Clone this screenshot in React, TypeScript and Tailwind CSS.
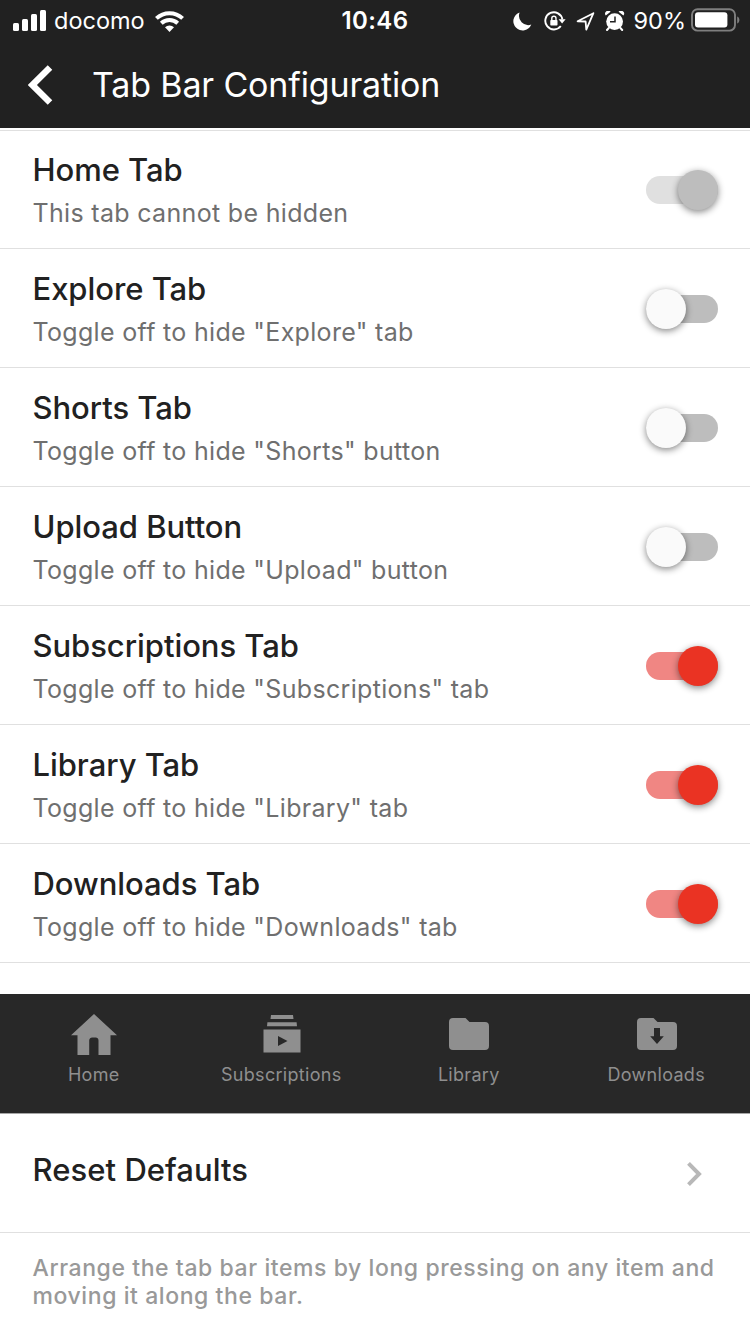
import { useState } from 'react';
import clsx from 'clsx';

type TabRow = {
    id: string;
    title: string;
    note: string;
    on: boolean;
    locked?: boolean;
};

const ROWS: TabRow[] = [
    { id: 'home', title: 'Home Tab', note: 'This tab cannot be hidden', on: true, locked: true },
    { id: 'explore', title: 'Explore Tab', note: 'Toggle off to hide "Explore" tab', on: false },
    { id: 'shorts', title: 'Shorts Tab', note: 'Toggle off to hide "Shorts" button', on: false },
    { id: 'upload', title: 'Upload Button', note: 'Toggle off to hide "Upload" button', on: false },
    { id: 'subs', title: 'Subscriptions Tab', note: 'Toggle off to hide "Subscriptions" tab', on: true },
    { id: 'library', title: 'Library Tab', note: 'Toggle off to hide "Library" tab', on: true },
    { id: 'downloads', title: 'Downloads Tab', note: 'Toggle off to hide "Downloads" tab', on: true },
];

function StatusBar() {
    return (
        <div className="grid h-10 grid-cols-3 items-center text-white">
            <div className="flex items-center pl-[13px]">
                <svg width="34" height="22" viewBox="0 0 34 22" fill="currentColor">
                    <rect x="0" y="13" width="6" height="8" rx="1.5" />
                    <rect x="9" y="9" width="6" height="12" rx="1.5" />
                    <rect x="18" y="4" width="6" height="17" rx="1.5" />
                    <rect x="27" y="0" width="6" height="21" rx="1.5" />
                </svg>
                <span className="ml-[7px] pt-px text-[23.5px] leading-10">docomo</span>
                <svg className="ml-[10px]" width="30" height="22" viewBox="0 0 30 22" fill="none" stroke="currentColor">
                    <path d="M1.4 8.4a19 19 0 0 1 26.2 0" strokeWidth="4" />
                    <path d="M6.3 13.3a12 12 0 0 1 16.4 0" strokeWidth="4" />
                    <path d="M10 17.2a6.8 6.8 0 0 1 9 0L14.5 22Z" fill="currentColor" stroke="none" />
                </svg>
            </div>
            <div className="pt-px text-center text-[24px] leading-10 font-semibold tracking-[0.4px]">10:46</div>
            <div className="flex items-center justify-end pr-[10px]">
                <svg className="mt-px" width="19" height="19" viewBox="0 0 19 19" fill="currentColor">
                    <path d="M6.600.4A9.300 9.300 0 1 0 18.300 12.600 9.400 9.400 0 0 1 6.600.4Z" />
                </svg>
                <svg className="ml-3" width="22" height="20" viewBox="0 0 22 20" fill="none" stroke="currentColor" strokeWidth="1.9">
                    <path d="M16.8 15A8.6 8.6 0 1 1 18.4 8.5" />
                    <path d="M14.6 8.2h7l-3.5 4.4Z" fill="currentColor" stroke="none" />
                    <rect x="6.3" y="9" width="7.2" height="5.6" rx="0.8" fill="currentColor" stroke="none" />
                    <path d="M7.8 9.5V7.4a2.1 2.1 0 0 1 4.2 0v2.1" strokeWidth="1.4" />
                </svg>
                <svg className="mt-px ml-[10px]" width="19" height="19" viewBox="0 0 19 19" fill="none" stroke="currentColor" strokeWidth="1.8" strokeLinejoin="round">
                    <path d="M17.4 1.2 1.6 9.3 9.6 9.5 10.3 17.6Z" />
                </svg>
                <svg className="ml-[10px]" width="20" height="20" viewBox="0 0 20 20" fill="currentColor">
                    <circle cx="9.6" cy="10.6" r="8.4" />
                    <path d="M.8 4.600A3 3 0 0 1 5.600.8ZM18.400 4.600A3 3 0 0 0 13.600.8Z" />
                    <path d="M3.8 17 2 19M15.4 17l1.8 2" stroke="currentColor" strokeWidth="2" strokeLinecap="round" />
                    <path d="M10 5.4v5.4H5" fill="none" stroke="#212121" strokeWidth="1.5" />
                </svg>
                <span className="ml-[9px] pt-px text-[23.5px] leading-10">90%</span>
                <svg className="-mt-px ml-[5px]" width="49" height="24" viewBox="0 0 49 24" fill="none">
                    <rect x="1" y="1.2" width="43" height="21.4" rx="5.6" stroke="#7f7f7f" strokeWidth="1.9" />
                    <rect x="4" y="4.2" width="32.4" height="15.4" rx="3" fill="#fff" />
                    <path d="M46.2 8.4c1.6.6 2.2 2 2.2 3.5s-.6 2.900-2.200 3.500Z" fill="#7f7f7f" />
                </svg>
            </div>
        </div>
    );
}

function Toggle({ on, locked, onChange }: { on: boolean; locked?: boolean; onChange: () => void }) {
    return (
        <button
            type="button"
            role="switch"
            aria-checked={on}
            disabled={locked}
            onClick={onChange}
            className="mt-0.5 grid h-10 w-[72px] items-center"
        >
            <span
                className={clsx(
                    'col-start-1 row-start-1 h-7 rounded-full',
                    locked ? 'bg-[#e0e0e0]' : on ? 'bg-[#f08683]' : 'bg-[#bdbdbd]',
                )}
            />
            <span
                className={clsx(
                    'col-start-1 row-start-1 size-10 rounded-full shadow-[0_2px_7px_rgba(0,0,0,0.48)]',
                    on ? 'justify-self-end' : 'justify-self-start',
                    locked ? 'bg-[#bdbdbd]' : on ? 'bg-[#ea3323]' : 'bg-[#fafafa]',
                )}
            />
        </button>
    );
}

function HomeIcon() {
    return (
        <svg className="ml-px" width="46" height="42" viewBox="0 0 46 42" fill="currentColor">
            <path d="M23 0 46 21.300H39.500V41H27.500V26.500C27.500 24 26 23.600 23 23.600S18.200 24 18.200 26.500V41H6.500V21.300H0Z" />
        </svg>
    );
}

function SubscriptionsIcon() {
    return (
        <svg className="ml-0.5" width="38" height="42" viewBox="0 0 38 42" fill="currentColor">
            <path d="M8 1h22l.5 4h-23ZM4.400 8.300h29.200l.4 4H4Z" />
            <path fillRule="evenodd" d="M.5 15.500h37v23H.5ZM15 22v10l9.500-5Z" />
        </svg>
    );
}

function FolderIcon({ arrow }: { arrow?: boolean }) {
    return (
        <svg className="ml-px" width="40" height="42" viewBox="0 0 40 42">
            <path
                fill="currentColor"
                d="M4 4h12.500l4 4H36a4 4 0 0 1 4 4v20a4 4 0 0 1-4 4H4a4 4 0 0 1-4-4V8a4 4 0 0 1 4-4Z"
            />
            {arrow && <path fill="#282828" d="M17 14h6v8.200h3.800L20 30l-6.800-7.800H17Z" />}
        </svg>
    );
}

const TABS = [
    { label: 'Home', icon: <HomeIcon /> },
    { label: 'Subscriptions', icon: <SubscriptionsIcon /> },
    { label: 'Library', icon: <FolderIcon /> },
    { label: 'Downloads', icon: <FolderIcon arrow /> },
];

export default function App() {
    const [rows, setRows] = useState<TabRow[]>(ROWS);

    const flip = (id: string) => {
        setRows((prev) => prev.map((r) => (r.id === id ? { ...r, on: !r.on } : r)));
    };

    return (
        <div className="h-[1334px] w-[750px] overflow-hidden bg-white font-['Inter','Liberation_Sans',sans-serif] text-[#212121]">
            <header className="h-32 bg-[#212121] text-white">
                <StatusBar />
                <div className="flex h-[88px] items-center pl-7">
                    <svg className="mt-px" width="25" height="40" viewBox="0 0 25 40" fill="none" stroke="currentColor" strokeWidth="6.4">
                        <path d="M22 2.400 4.400 20 22 37.600" />
                    </svg>
                    <h1 className="ml-[39px] pt-0.5 text-[34px] leading-[44px] tracking-[-0.15px]">Tab Bar Configuration</h1>
                </div>
            </header>

            <main>
                <div className="mt-0.5 -mb-px h-px bg-[#e0e0e0]" />
                {rows.map((r) => (
                    <div key={r.id} className="flex h-[119px] items-center justify-between border-b border-[#e0e0e0] pr-8 pl-[32.5px]">
                        <div className="pt-1">
                            <div className="text-[31px] leading-[44px] font-medium tracking-[-0.05px]">{r.title}</div>
                            <div className="text-[25px] leading-[42px] tracking-[0.32px] text-[#6f6f6f]">{r.note}</div>
                        </div>
                        <Toggle on={r.on} locked={r.locked} onChange={() => flip(r.id)} />
                    </div>
                ))}

                {/* Preview of the bar */}
                <nav className="mt-[31px] grid h-[120px] grid-cols-4 border-b border-[#a6a6a6] bg-[#282828] text-[#8f8f8f]">
                    {TABS.map((t) => (
                        <div key={t.label} className="flex flex-col items-center pt-5">
                            {t.icon}
                            <span className="mt-1.5 text-[18px] leading-[26px] tracking-[0.3px]">{t.label}</span>
                        </div>
                    ))}
                </nav>

                <div className="flex h-[119px] items-center justify-between border-b border-[#e0e0e0] pr-12 pl-[32.5px]">
                    <span className="pb-1.5 text-[31px] leading-[44px] font-medium tracking-[0.05px]">Reset Defaults</span>
                    <svg className="mt-0.5" width="15" height="24" viewBox="0 0 15 24" fill="none" stroke="#b8b8b8" strokeWidth="4">
                        <path d="M1.500 1.400 12 12 1.500 22.600" />
                    </svg>
                </div>

                <p className="pt-[21px] pr-4 pl-[32.5px] text-[23px] leading-7 font-medium tracking-[0.58px] text-[#999]">
                    Arrange the tab bar items by long pressing on any item and moving it along the bar.
                </p>
            </main>
        </div>
    );
}
